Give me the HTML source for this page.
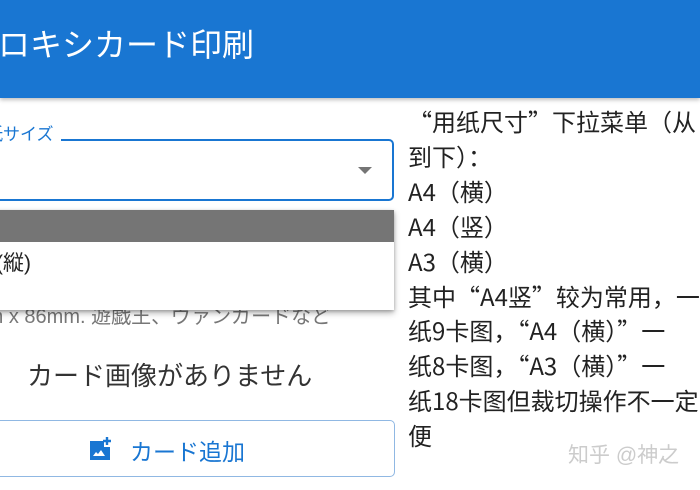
<!DOCTYPE html>
<html><head><meta charset="utf-8"><style>
*{margin:0;padding:0;box-sizing:border-box}
body{width:700px;height:490px;overflow:hidden;background:#fff;position:relative;font-family:"Liberation Sans","Noto Sans CJK JP",sans-serif}
.hdr{position:absolute;left:0;top:0;width:700px;height:98px;background:#1976d2;box-shadow:0 2px 4px rgba(0,0,0,.25)}
.hdr span{position:absolute;left:-2px;top:25px;color:#fff;font-size:32px;line-height:40px;white-space:nowrap}
.sel{position:absolute;left:-10px;top:139px;width:404px;height:62px;border:2px solid #1976d2;border-radius:5px}
.lbl{position:absolute;left:-14px;top:123px;color:#1976d2;font-size:17px;background:#fff;padding:0 7px 0 0;line-height:24px;white-space:nowrap}
.arrow{position:absolute;left:358px;top:167px;width:0;height:0;border-left:7px solid transparent;border-right:7px solid transparent;border-top:7px solid #757575}
.help{position:absolute;left:-30px;top:300px;color:#777;font-size:20px;white-space:nowrap}
.menu{position:absolute;left:-10px;top:210px;width:404px;height:100px;background:#fff;box-shadow:0 3px 6px rgba(0,0,0,.3),0 1px 3px rgba(0,0,0,.2)}
.menu .hi{height:32px;background:#757575}
.menu .it{position:absolute;left:6px;top:37px;font-size:21px;color:#222}
.none{position:absolute;left:27px;top:356px;font-size:26px;color:#333;white-space:nowrap}
.btn{position:absolute;left:-10px;top:420px;width:405px;height:57px;border:1px solid #90b8e3;border-radius:5px}
.btn span{position:absolute;left:139px;top:12px;font-size:23px;color:#1976d2;white-space:nowrap}
.btn svg{position:absolute;left:97px;top:15px}
.txt{position:absolute;left:408px;top:104px;font-family:"Noto Sans CJK SC","Liberation Sans",sans-serif;font-size:24px;line-height:34.9px;color:#222;white-space:nowrap}
.wm{position:absolute;left:568px;top:439px;font-size:21px;color:#ccc;white-space:nowrap}
</style></head><body>
<div class="hdr"><span>ロキシカード印刷</span></div>
<div class="help">mm x 86mm. 遊戯王、ヴァンガードなど</div>
<div class="sel"></div>
<div class="lbl">紙サイズ</div>
<div class="arrow"></div>
<div class="menu"><div class="hi"></div><div class="it">(縦)</div></div>
<div class="none">カード画像がありません</div>
<div class="btn"><svg width="26" height="26" viewBox="0 0 26 26"><path d="M2 5h14v6h6v13H2z" fill="#1976d2"/><path d="M19 1v8M15 5h8" stroke="#1976d2" stroke-width="2.4"/><path d="M5 20l3-4 2 2 3-4 4 6z" fill="#fff"/></svg><span>カード追加</span></div>
<div class="txt">“用纸尺寸”下拉菜单（从<br>到下）：<br>A4（横）<br>A4（竖）<br>A3（横）<br>其中“A4竖”较为常用，一<br>纸9卡图，“A4（横）”一<br>纸8卡图，“A3（横）”一<br>纸18卡图但裁切操作不一定<br>便</div>
<div class="wm">知乎 @神之</div>
</body></html>
